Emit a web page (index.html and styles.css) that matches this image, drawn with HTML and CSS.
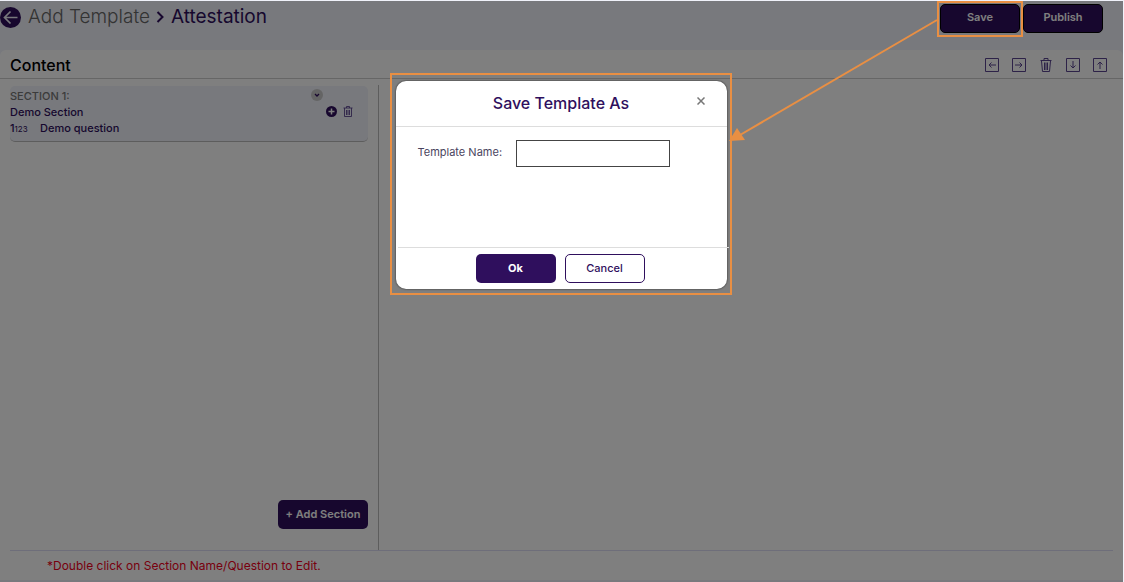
FILE: index.html
```
<!DOCTYPE html>
<html lang="en">
<head>
    <meta charset="UTF-8">
    <title>Add Template</title>
    <link rel="stylesheet" href="styles.css">
</head>
<body>
<div class="app">
    <header class="top">
        <a class="back" href="#" aria-label="Back">
            <svg width="22" height="22" viewBox="0 0 22 22">
                <circle cx="10.5" cy="11.5" r="10.5" fill="#2f0f5d"/>
                <path d="M17.500 11.500H4.500M10.500 5.500L4.500 11.500l6 6" fill="none" stroke="#eef0f8" stroke-width="1.700"/>
            </svg>
        </a>
        <h1><a href="#">Add Template</a>
            <svg width="9" height="14" viewBox="0 0 9 14"><path d="M1.500 2l5 5-5 5" fill="none" stroke="#2f0f5d" stroke-width="2"/></svg>
            <span>Attestation</span></h1>
        <div class="actions">
            <button type="button" class="btn dark">Save</button>
            <button type="button" class="btn dark">Publish</button>
        </div>
    </header>

    <main class="panel">
        <div class="bar">
            <h2>Content</h2>
            <!-- move / delete tools -->
            <div class="tools">
                <button type="button" aria-label="Left"><svg viewBox="0 0 14 14"><path d="M.5.5h13v13H.5zM11 7H4M6.500 4.500L4 7l2.500 2.500"/></svg></button>
                <button type="button" aria-label="Right"><svg viewBox="0 0 14 14"><path d="M.5.5h13v13H.5zM3 7h7M7.500 4.500L10 7 7.500 9.500"/></svg></button>
                <button type="button" aria-label="Delete"><svg viewBox="0 0 14 14"><path d="M1.500 2.500h11M5 2.500v-2h4v2M2.500 3l1 10.500h7l1-10.500M5.500 4.500V12M7 4.500V12M8.500 4.500V12"/></svg></button>
                <button type="button" aria-label="Down"><svg viewBox="0 0 14 14"><path d="M.5.5h13v13H.5zM7 3v7M4.500 7.500L7 10l2.500-2.500"/></svg></button>
                <button type="button" aria-label="Up"><svg viewBox="0 0 14 14"><path d="M.5.5h13v13H.5zM7 11V4M4.500 6.500L7 4l2.500 2.500"/></svg></button>
            </div>
        </div>
        <div class="work">
            <aside class="side">
                <section class="card">
                    <div class="names">
                        <p class="label">SECTION 1:</p>
                        <p>Demo Section</p>
                        <p class="question"><span>1<small>123</small></span>Demo question</p>
                    </div>
                    <div class="card-tools">
                        <button type="button" class="toggle" aria-label="Collapse"><svg width="12" height="12" viewBox="0 0 12 12"><circle cx="6" cy="6" r="6" fill="#c9c9c9"/><path d="M4 5l2 2 2-2" fill="none" stroke="#2f0f5d" stroke-width="1.300"/></svg></button>
                        <div class="pair">
                            <button type="button" aria-label="Add"><svg width="11" height="11" viewBox="0 0 11 11"><circle cx="5.500" cy="5.500" r="5.500" fill="#2f0f5d"/><path d="M2.500 5.500h6M5.500 2.500v6" stroke="#fff" stroke-width="1.500"/></svg></button>
                            <button type="button" aria-label="Delete section"><svg width="10" height="11" viewBox="0 0 10 11"><path d="M.5 2h9M3.500 2V.5h3V2M1.500 2v8.500h7V2M3.500 4v5M5 4v5M6.500 4v5" fill="none" stroke="#5a4490" stroke-width=".9"/></svg></button>
                        </div>
                    </div>
                </section>
                <button type="button" class="btn add">+ Add Section</button>
            </aside>
            <div class="canvas"></div>
        </div>
        <p class="hint">*Double click on Section Name/Question to Edit.</p>
    </main>
</div>

<div class="backdrop">
    <div class="mark-save"></div>
    <!-- arrow from the save button to the dialog -->
    <svg class="arrow" width="208" height="126" viewBox="0 0 208 126">
        <path d="M207 1L10 116" stroke="#e98f43" stroke-width="2"/>
        <path d="M-1 122L7 109l8 12z" fill="#e98f43"/>
    </svg>
    <div class="mark-dialog">
        <form class="dialog" role="dialog" aria-labelledby="dialog-title">
            <div class="dialog-head">
                <h3 id="dialog-title">Save Template As</h3>
                <button type="button" class="close" aria-label="Close"><svg width="8" height="8" viewBox="0 0 8 8"><path d="M.5.5l7 7M7.500.5l-7 7" stroke="#777" stroke-width="1.500"/></svg></button>
            </div>
            <div class="dialog-body">
                <label for="name">Template Name:</label>
                <input type="text" id="name">
            </div>
            <div class="dialog-foot">
                <button type="button" class="btn ok">Ok</button>
                <button type="button" class="btn cancel">Cancel</button>
            </div>
        </form>
    </div>
</div>
</body>
</html>
```
FILE: styles.css
```
*{
    margin: 0;
    padding: 0;
    box-sizing: border-box;
}
body{
    font-family: Inter, "Liberation Sans", sans-serif;
    font-size: 11px;
    line-height: 16px;
    color: #2f0f5d;
    background-color: #f0f2fa;
}
button{
    font: inherit;
    color: inherit;
    border: none;
    background: none;
}
a{
    color: inherit;
    text-decoration: none;
}
svg{
    display: block;
}
.app{
    display: flex;
    flex-direction: column;
    min-height: 100vh;
    padding: 1px 1px 2px 0;
}
.top{
    display: flex;
    align-items: flex-start;
    height: 49px;
    padding-right: 20px;
}
.back{
    margin-top: 5px;
}
h1{
    display: flex;
    align-items: center;
    gap: 6px;
    margin-left: 6px;
    font-size: 19px;
    line-height: 32px;
    font-weight: 300;
}
h1 a{
    color: #666;
}
h1 span{
    font-weight: 400;
}
.actions{
    display: flex;
    gap: 3px;
    margin: 3px 0 0 auto;
}
.btn{
    width: 80px;
    height: 29px;
    padding-bottom: 1px;
    border-radius: 5px;
    font-weight: 600;
    color: #fff;
    background-color: #2f0f5d;
}
.dark{
    border: 1px solid #000;
    padding-bottom: 3px;
}

.panel{
    flex: 1;
    display: flex;
    flex-direction: column;
    border-radius: 6px 6px 0 0;
    background-color: #fff;
}
.bar{
    display: flex;
    align-items: center;
    justify-content: space-between;
    height: 29px;
    padding: 2px 16px 0 10px;
    border-bottom: 1px solid #ccc;
}
h2{
    font-size: 16px;
    line-height: 26px;
    font-weight: 500;
    color: #000;
}
.tools{
    display: flex;
    gap: 13px;
}
.tools svg{
    width: 14px;
    height: 14px;
    fill: none;
    stroke: #5a4490;
}
.work{
    flex: 1;
    display: flex;
    padding-top: 6px;
}
.side{
    flex: 0 0 379px;
    display: flex;
    flex-direction: column;
    justify-content: space-between;
    padding: 1px 10px 21px;
    border-right: 1px solid #bbb;
}
.canvas{
    flex: 1;
}
.card{
    display: flex;
    justify-content: space-between;
    height: 56px;
    padding: 2px 15px 0 0;
    border-radius: 5px;
    border-bottom: 1px solid #bbb;
    background-color: #f0f2fa;
}
.label{
    color: #777;
}
.names{
    font-weight: 500;
}
.question span{
    display: inline-block;
    width: 30px;
}
.question small{
    font-size: 8px;
    font-weight: 400;
}
.card-tools{
    width: 42px;
}
.toggle{
    display: block;
    margin-top: 1px;
}
.pair{
    display: flex;
    justify-content: flex-end;
    gap: 6px;
    margin-top: 5px;
}
.add{
    align-self: flex-end;
    width: 90px;
}
.hint{
    margin: 0 10px;
    padding: 7px 0 6px 37px;
    border-top: 1px solid #dcdcf4;
    font-size: 12px;
    color: #f00020;
}

.backdrop{
    position: absolute;
    top: 1px;
    right: 1px;
    bottom: 0;
    left: 0;
    display: flex;
    justify-content: center;
    align-items: flex-start;
    padding: 72px 2px 0 0;
    background-color: rgba(0,0,0,.5);
}
.mark-save{
    position: absolute;
    top: 0;
    right: 100px;
    width: 86px;
    height: 36px;
    border: 2px solid #e98f43;
}
.arrow{
    position: absolute;
    top: 18px;
    right: 185px;
    overflow: visible;
}
.mark-dialog{
    width: 342px;
    padding: 6px 3px 4px 4px;
    border: 2px solid #e98f43;
}
.dialog{
    border-radius: 10px;
    background-color: #fff;
    box-shadow: 0 0 2px rgba(0,0,0,.8);
}
.dialog-head{
    position: relative;
    height: 46px;
    border-bottom: 1px solid #ddd;
}
.dialog-head h3{
    font-size: 16px;
    line-height: 45px;
    font-weight: 500;
    text-align: center;
}
.close{
    position: absolute;
    top: 16px;
    right: 22px;
}
.dialog-body{
    display: flex;
    align-items: flex-start;
    gap: 14px;
    height: 120px;
    padding: 13px 22px 0;
}
.dialog-body label{
    line-height: 24px;
    color: #4a4560;
}
.dialog-body input{
    width: 154px;
    height: 27px;
    padding: 0 6px;
    border: 1px solid #444;
    font: inherit;
}
.dialog-foot{
    display: flex;
    justify-content: center;
    gap: 9px;
    margin: 0 -2px 0 2px;
    padding: 6px 6px 6px 0;
    border-top: 1px solid #ddd;
}
.ok{
    font-weight: 700;
}
.cancel{
    border: 1px solid #2f0f5d;
    font-weight: 500;
    color: #2f0f5d;
    background-color: #fff;
}
```
